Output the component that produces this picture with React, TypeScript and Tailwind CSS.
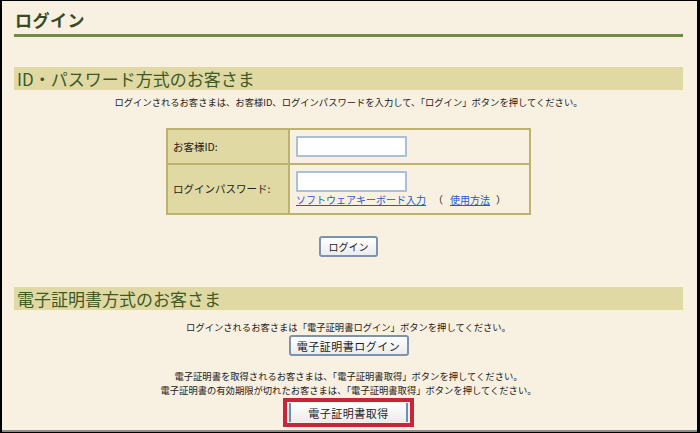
export default function App() {
  const jp = { fontFamily: '"Noto Sans CJK JP", "Liberation Sans", sans-serif' };
  return (
    <div className="w-[700px] h-[433px] overflow-hidden bg-black" style={jp}>
      <div className="h-[431px] ml-[2px] mr-[3px] mt-[1px] bg-[#f8f0e0] border-b-2 border-[#8c8c8c] pl-[12px] pr-[14px] pt-[8px] text-[#222]">
        {/* Page title */}
        <div className="border-b-[3px] border-[#6f8b47] pb-[3px] pl-[1px]">
          <h1 className="text-[17px] leading-[22px] font-bold text-[#3b4a22] tracking-[0.5px]">ログイン</h1>
        </div>

        {/* ID / password */}
        <h2 className="mt-[30px] h-[23px] bg-[#e0d9a4] pl-[3px] text-[17px] leading-[23px] text-[#3d5a26]">
          ID・パスワード方式のお客さま
        </h2>
        <p className="mt-[5px] text-center text-[9.3px] leading-[14px]">
          ログインされるお客さまは、お客様ID、ログインパスワードを入力して、「ログイン」ボタンを押してください。
        </p>

        <div className="flex justify-center mt-[19px]">
          <table className="w-[365px] border-collapse border-2 border-[#bdb26e] text-[10.5px]">
            <tbody>
              <tr className="h-[35px]">
                <th className="w-[122px] bg-[#e0d9a4] border-2 border-[#bdb26e] text-left font-normal pl-[5px]">お客様ID:</th>
                <td className="border-2 border-[#bdb26e] pl-[6px]">
                  <input className="block w-[111px] h-[21px] bg-white border-2 border-[#a9c0d8] rounded-[1px]" />
                </td>
              </tr>
              <tr className="h-[50px]">
                <th className="bg-[#e0d9a4] border-2 border-[#bdb26e] text-left font-normal pl-[5px]">ログインパスワード:</th>
                <td className="border-2 border-[#bdb26e] pl-[6px] pt-[4px] pb-[5px]">
                  <input type="password" className="block w-[111px] h-[21px] bg-white border-2 border-[#a9c0d8] rounded-[1px]" />
                  <div className="mt-[1px] leading-[14px] text-[10px]">
                    <a className="text-[#2758d0] underline">ソフトウェアキーボード入力</a>
                    <span className="mx-[7px]">（</span>
                    <a className="text-[#2758d0] underline">使用方法</a>
                    <span className="ml-[6px]">）</span>
                  </div>
                </td>
              </tr>
            </tbody>
          </table>
        </div>

        <div className="flex justify-center mt-[21px]">
          <button className="w-[59px] h-[21px] bg-gradient-to-b from-white to-[#ececec] border-2 border-[#7c93ad] rounded-[3px] text-[10px] leading-[16px]">
            ログイン
          </button>
        </div>

        {/* Certificate */}
        <h2 className="mt-[30px] h-[23px] bg-[#e0d9a4] pl-[3px] text-[17px] leading-[23px] text-[#3d5a26]">
          電子証明書方式のお客さま
        </h2>
        <p className="mt-[10px] text-center text-[9.3px] leading-[14px]">
          ログインされるお客さまは「電子証明書ログイン」ボタンを押してください。
        </p>
        <div className="flex justify-center mt-[1px]">
          <button className="w-[120px] h-[21px] bg-gradient-to-b from-white to-[#ececec] border-2 border-[#7c93ad] rounded-[3px] text-[11px] leading-[16px] tracking-[0.5px]">
            電子証明書ログイン
          </button>
        </div>
        <p className="mt-[13px] text-center text-[9.3px] leading-[14px]">
          電子証明書を取得されるお客さまは、「電子証明書取得」ボタンを押してください。
        </p>
        <p className="text-center text-[9.3px] leading-[14px]">
          電子証明書の有効期限が切れたお客さまは、「電子証明書取得」ボタンを押してください。
        </p>
        <div className="flex justify-center mt-[1px]">
          <div className="border-[4px] border-[#c7263a] px-[2px] py-[1px]">
            <button className="block w-[119px] h-[19px] bg-gradient-to-b from-white to-[#ececec] border-x-2 border-[#6c8fb8] text-[11px] leading-[16px] tracking-[0.5px]">
              電子証明書取得
            </button>
          </div>
        </div>
      </div>
    </div>
  );
}
